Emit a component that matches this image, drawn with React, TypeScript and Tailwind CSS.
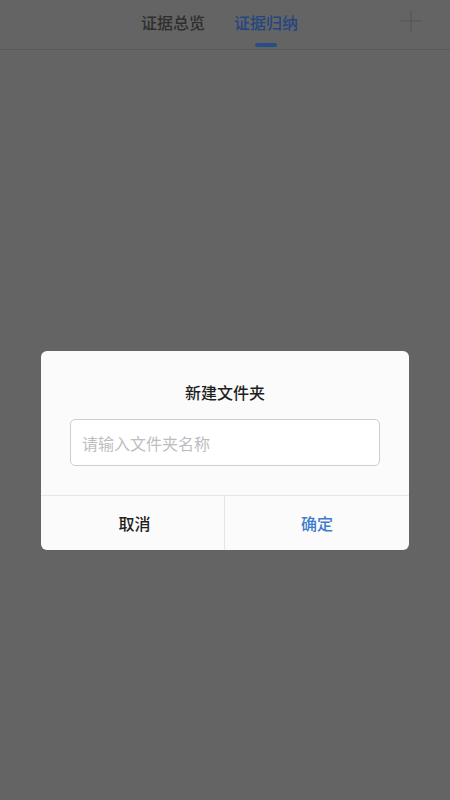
import { Plus } from "lucide-react";

const cjk = { fontFamily: '"Noto Sans CJK SC", "Noto Sans", sans-serif' };

function Header() {
  return (
    <header className="grid h-[50px] grid-cols-[1fr_auto_1fr] items-start border-b border-[#5a5a5a] bg-[#646464]">
      <div />
      <nav className="flex items-start gap-[29px] pt-[10px] pr-[11px]">
        <button className="text-base font-medium leading-[24px] text-[#2e2e2e]">证据总览</button>
        <button className="flex flex-col items-center text-base font-medium leading-[24px] text-[#244680]">
          证据归纳
          <span className="mt-[9px] h-[4px] w-[22px] rounded-full bg-[#284e88]" />
        </button>
      </nav>
      <div className="flex justify-end pr-[21px] pt-[3px]">
        <Plus className="h-[36px] w-[36px] text-[#555555]" strokeWidth={0.7} />
      </div>
    </header>
  );
}

function NewFolderDialog() {
  return (
    <div className="w-[368px] overflow-hidden rounded-[6px] bg-[#fbfbfb]">
      <h2 className="pt-[29px] text-center text-base font-medium leading-[24px] text-[#1f1f1f]">
        新建文件夹
      </h2>
      <div className="px-[29px] pt-[15px] pb-[29px]">
        <input
          className="h-[47px] w-full rounded-[5px] border-[1.5px] border-[#cdcdd2] bg-white px-[11px] text-base text-[#333] outline-none placeholder:text-[#bdbdc2]"
          style={cjk}
          placeholder="请输入文件夹名称"
        />
      </div>
      <div className="grid h-[55px] grid-cols-2 border-t border-[#e6e6e6]">
        <button className="border-r border-[#e6e6e6] pl-[4px] text-base font-medium text-[#1f1f1f]">取消</button>
        <button className="text-base font-medium text-[#3d7bcc]">确定</button>
      </div>
    </div>
  );
}

export default function App() {
  return (
    <div className="relative h-[800px] w-[450px] overflow-hidden bg-[#646464]" style={cjk}>
      <Header />
      <div className="absolute inset-0 flex items-start justify-center pt-[351px]">
        <NewFolderDialog />
      </div>
    </div>
  );
}
